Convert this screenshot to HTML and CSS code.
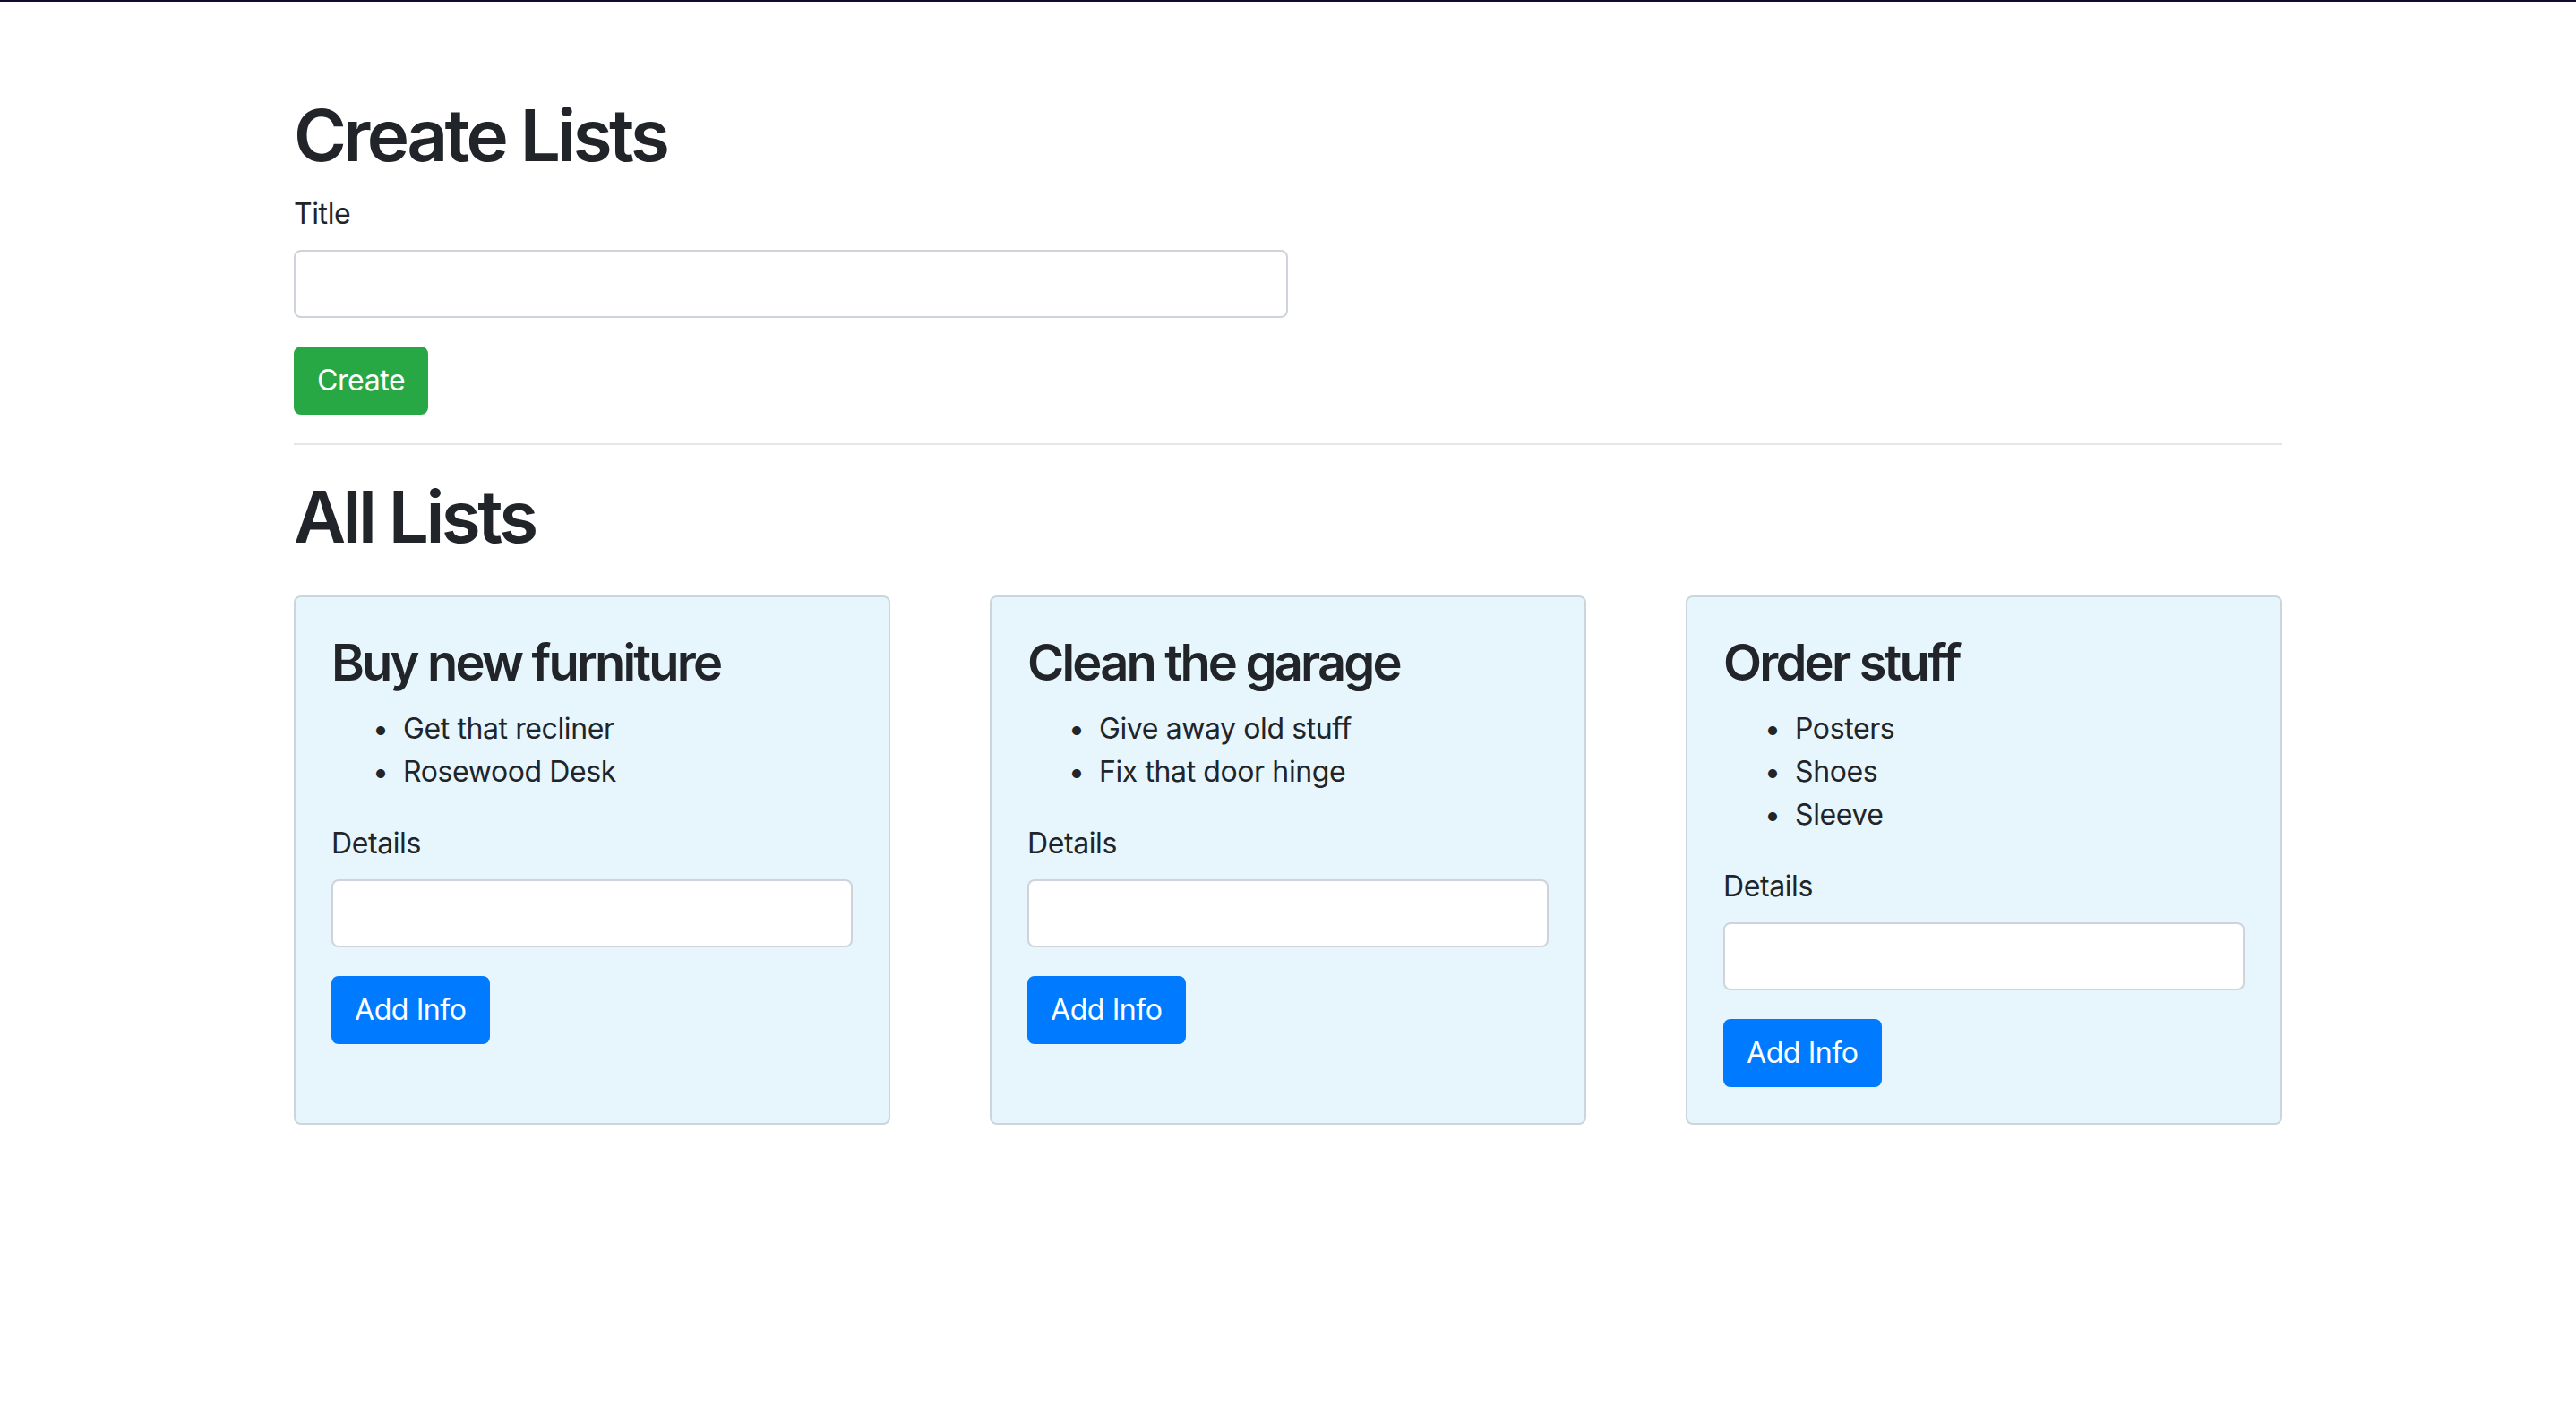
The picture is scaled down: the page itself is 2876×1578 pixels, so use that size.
FILE: index.html
```html
<!DOCTYPE html>
<html lang="en">
<head>
<meta charset="utf-8">
<title>Lists</title>
<link rel="stylesheet" href="styles.css">
</head>
<body>
<div class="topbar"></div>
<main class="container">
  <section class="create">
    <h1 class="page-title">Create Lists</h1>
    <form class="create-form">
      <div class="form-group">
        <label class="field-label" for="title">Title</label>
        <input class="field" id="title" type="text">
      </div>
      <button type="button" class="btn btn-success">Create</button>
    </form>
  </section>
  <hr class="divider">
  <h1 class="page-title">All Lists</h1>
  <div class="cards">
    <article class="card">
      <div class="card-body">
        <h3 class="card-title">Buy new furniture</h3>
        <ul class="items">
          <li>Get that recliner</li>
          <li>Rosewood Desk</li>
        </ul>
        <form>
          <div class="form-group">
            <label class="field-label" for="d1">Details</label>
            <input class="field" id="d1" type="text">
          </div>
          <button type="button" class="btn btn-primary">Add Info</button>
        </form>
      </div>
    </article>
    <article class="card">
      <div class="card-body">
        <h3 class="card-title">Clean the garage</h3>
        <ul class="items">
          <li>Give away old stuff</li>
          <li>Fix that door hinge</li>
        </ul>
        <form>
          <div class="form-group">
            <label class="field-label" for="d2">Details</label>
            <input class="field" id="d2" type="text">
          </div>
          <button type="button" class="btn btn-primary">Add Info</button>
        </form>
      </div>
    </article>
    <article class="card">
      <div class="card-body">
        <h3 class="card-title">Order stuff</h3>
        <ul class="items">
          <li>Posters</li>
          <li>Shoes</li>
          <li>Sleeve</li>
        </ul>
        <form>
          <div class="form-group">
            <label class="field-label" for="d3">Details</label>
            <input class="field" id="d3" type="text">
          </div>
          <button type="button" class="btn btn-primary">Add Info</button>
        </form>
      </div>
    </article>
  </div>
</main>
</body>
</html>
```
FILE: styles.css
```css
* { box-sizing: border-box; }

html, body {
  margin: 0;
  padding: 0;
  background: #fff;
}

body {
  font-family: Inter, "Noto Sans", "Liberation Sans", sans-serif;
  font-size: 32px;
  line-height: 48px;
  letter-spacing: -0.4px;
  color: #212529;
}

.topbar {
  height: 2px;
  background: #100b30;
}

.container {
  width: 2220px;
  margin: 0 auto;
  padding-top: 101px;
}

.page-title {
  margin: 0 0 16px;
  font-size: 80px;
  line-height: 96px;
  font-weight: 600;
  letter-spacing: -0.045em;
}

.create-form {
  width: 50%;
}

.form-group {
  margin-bottom: 32px;
}

.field-label {
  display: inline-block;
  margin-bottom: 16px;
}

.field {
  display: block;
  width: 100%;
  height: 76px;
  padding: 12px 24px;
  font: inherit;
  color: #495057;
  background: #fff;
  border: 2px solid #ced4da;
  border-radius: 8px;
  outline: none;
}

.btn {
  display: inline-block;
  padding: 12px 24px;
  font: inherit;
  line-height: 48px;
  letter-spacing: -0.4px;
  color: #fff;
  border: 2px solid transparent;
  border-radius: 8px;
  cursor: pointer;
}

.btn-success {
  background: #28a745;
  border-color: #28a745;
}

.btn-primary {
  background: #007bff;
  border-color: #007bff;
}

.divider {
  margin: 32px 0;
  border: 0;
  border-top: 2px solid rgba(0, 0, 0, 0.1);
}

.cards {
  display: flex;
  justify-content: space-between;
  margin-top: 40px;
}

.card {
  width: 30%;
  background: #e7f5fc;
  border: 2px solid rgba(0, 0, 0, 0.125);
  border-radius: 8px;
}

.card-body {
  padding: 40px;
}

.card-title {
  margin: 0 0 16px;
  font-size: 56px;
  line-height: 67px;
  font-weight: 600;
  letter-spacing: -0.05em;
}

.items {
  margin: 0 0 32px;
  padding-left: 80px;
}

.items li::marker {
  content: "\2022\00a0\00a0";
}
```
